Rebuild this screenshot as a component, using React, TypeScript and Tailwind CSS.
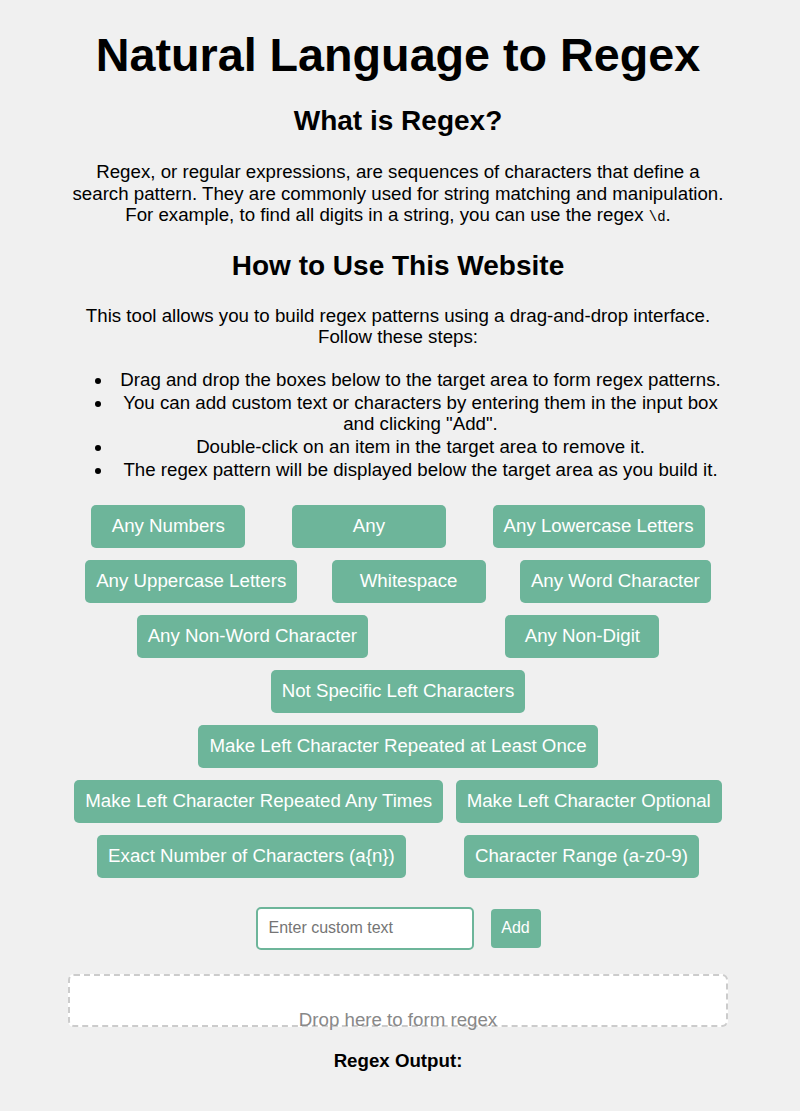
const boxes = [
  "Any Numbers",
  "Any",
  "Any Lowercase Letters",
  "Any Uppercase Letters",
  "Whitespace",
  "Any Word Character",
  "Any Non-Word Character",
  "Any Non-Digit",
  "Not Specific Left Characters",
  "Make Left Character Repeated at Least Once",
  "Make Left Character Repeated Any Times",
  "Make Left Character Optional",
  "Exact Number of Characters (a{n})",
  "Character Range (a-z0-9)",
];

const steps = [
  "Drag and drop the boxes below to the target area to form regex patterns.",
  'You can add custom text or characters by entering them in the input box and clicking "Add".',
  "Double-click on an item in the target area to remove it.",
  "The regex pattern will be displayed below the target area as you build it.",
];

export default function App() {
  return (
    <main className="min-h-[1111px] bg-[#f0f0f0] pr-[4px] font-['Liberation_Sans',Arial,sans-serif] text-black">
      <div className="mx-auto flex w-[660px] flex-col items-center pt-[28px] text-center">
        <h1 className="text-[46.7px] font-bold leading-[55px]">Natural Language to Regex</h1>

        <h2 className="mt-[22px] text-[28px] font-bold leading-[32px]">What is Regex?</h2>
        <p className="mt-[24px] text-[18.7px] leading-[21.5px]">
          Regex, or regular expressions, are sequences of characters that define a search pattern.
          They are commonly used for string matching and manipulation. For example, to find all
          digits in a string, you can use the regex{" "}
          <code className="font-['Liberation_Mono',monospace] text-[14px]">\d</code>.
        </p>

        <h2 className="mt-[21px] text-[28px] font-bold leading-[32px]">How to Use This Website</h2>
        <p className="mt-[23px] text-[18.7px] leading-[21.5px]">
          This tool allows you to build regex patterns using a drag-and-drop interface. Follow these
          steps:
        </p>
        <ul className="mt-[21px] w-full list-disc pl-[45px] text-[18.7px] leading-[21px]">
          {steps.map((s) => (
            <li key={s} className="mb-[2px]">
              {s}
            </li>
          ))}
        </ul>

        <div className="mt-[23px] flex w-full flex-wrap justify-around gap-y-[12px]">
          {boxes.map((b) => (
            <div
              key={b}
              className="mx-[5px] flex h-[43px] min-w-[154px] items-center justify-center rounded-[5px] bg-[#6db59a] px-[11px] text-[18.7px] whitespace-nowrap text-white"
            >
              {b}
            </div>
          ))}
        </div>

        <div className="mt-[29px] flex items-center gap-[17px]">
          <input
            type="text"
            placeholder="Enter custom text"
            className="h-[43px] w-[218px] rounded-[5px] border-2 border-[#6db59a] bg-white px-[11px] text-[16px] placeholder:text-[#757575] outline-none"
          />
          <button className="h-[39px] w-[50px] rounded-[4px] bg-[#6db59a] text-[16px] text-white">
            Add
          </button>
        </div>

        <div className="mt-[24px] h-[53px] w-full rounded-[6px] border-2 border-dashed border-[#cccccc] bg-white pt-[33px] text-[18.7px] leading-[21.5px] text-[#888888]">
          Drop here to form regex
        </div>

        <h3 className="mt-[23px] text-[18.7px] font-bold leading-[21px]">Regex Output:</h3>
      </div>
    </main>
  );
}
